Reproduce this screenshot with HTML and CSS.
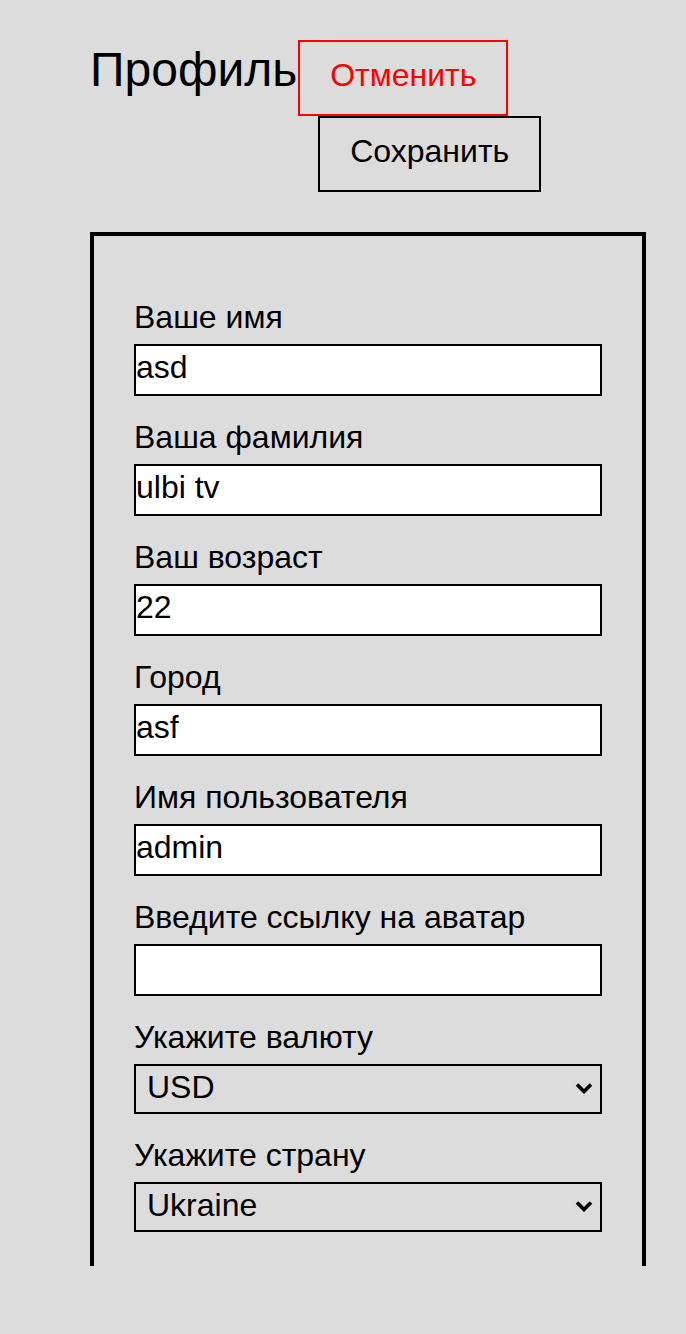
FILE: index.html
```html
<!DOCTYPE html>
<html lang="ru">
<head>
<meta charset="utf-8">
<title>Профиль</title>
<link rel="stylesheet" href="styles.css">
</head>
<body>
<div class="page">
  <div class="header">
    <h1 class="title">Профиль</h1>
    <div class="actions">
      <button class="btn btn-cancel" type="button">Отменить</button>
      <button class="btn btn-save" type="button">Сохранить</button>
    </div>
  </div>
  <div class="card">
    <div class="field">
      <label class="label">Ваше имя</label>
      <input class="input" type="text" value="asd">
    </div>
    <div class="field">
      <label class="label">Ваша фамилия</label>
      <input class="input" type="text" value="ulbi tv">
    </div>
    <div class="field">
      <label class="label">Ваш возраст</label>
      <input class="input" type="text" value="22">
    </div>
    <div class="field">
      <label class="label">Город</label>
      <input class="input" type="text" value="asf">
    </div>
    <div class="field">
      <label class="label">Имя пользователя</label>
      <input class="input" type="text" value="admin">
    </div>
    <div class="field">
      <label class="label">Введите ссылку на аватар</label>
      <input class="input" type="text" value="">
    </div>
    <div class="field">
      <label class="label">Укажите валюту</label>
      <div class="select-wrap">
        <select class="select">
          <option>USD</option>
          <option>EUR</option>
          <option>RUB</option>
        </select>
        <svg class="chevron" width="18" height="12" viewBox="0 0 18 12" aria-hidden="true">
          <polyline points="2,2.5 9,9.5 16,2.5" fill="none" stroke="#000" stroke-width="3.6" stroke-linejoin="miter"/>
        </svg>
      </div>
    </div>
    <div class="field">
      <label class="label">Укажите страну</label>
      <div class="select-wrap">
        <select class="select">
          <option>Ukraine</option>
          <option>Russia</option>
          <option>Belarus</option>
        </select>
        <svg class="chevron" width="18" height="12" viewBox="0 0 18 12" aria-hidden="true">
          <polyline points="2,2.5 9,9.5 16,2.5" fill="none" stroke="#000" stroke-width="3.6" stroke-linejoin="miter"/>
        </svg>
      </div>
    </div>
  </div>
</div>
</body>
</html>
```

FILE: styles.css
```css
html, body {
  margin: 0;
  padding: 0;
  background: #dcdcdc;
}
body {
  font-family: "Liberation Sans", Arial, sans-serif;
  color: #000;
  min-height: 1334px;
}
.page {
  padding: 40px 40px 0 90px;
}
.header {
  display: flex;
  align-items: flex-start;
}
.title {
  margin: 0 1px 0 0;
  font-size: 48px;
  font-weight: 400;
  line-height: 60px;
}
.actions {
  display: flex;
  flex-direction: column;
  align-items: flex-start;
}
.btn {
  font-family: "Liberation Sans", Arial, sans-serif;
  font-size: 32px;
  background: transparent;
  height: 76px;
  padding: 0 30px 6px 30px;
  margin: 0;
  border-radius: 0;
  cursor: pointer;
}
.btn-cancel {
  color: #ff0000;
  border: 2px solid #ff0000;
}
.btn-save {
  color: #000;
  border: 2px solid #000;
  margin-left: 20px;
}
.card {
  margin-top: 40px;
  box-sizing: border-box;
  width: 556px;
  height: 1034px;
  border: 4px solid #000;
  border-bottom: none;
  padding: 62px 40px 0 40px;
  display: flex;
  flex-direction: column;
  gap: 22px;
}
.field {
  display: flex;
  flex-direction: column;
  gap: 9px;
}
.label {
  font-size: 32px;
  line-height: 36px;
  padding-top: 1px;
}
.input {
  box-sizing: border-box;
  width: 468px;
  height: 52px;
  border: 2px solid #000;
  background: #fff;
  border-radius: 0;
  padding: 0 1px 6px 0;
  margin: 0;
  font-family: "Liberation Sans", Arial, sans-serif;
  font-size: 32px;
  color: #000;
  outline: none;
}
.select-wrap {
  position: relative;
  width: 468px;
  height: 50px;
}
.select {
  box-sizing: border-box;
  width: 468px;
  height: 50px;
  -webkit-appearance: none;
  appearance: none;
  border: 2px solid #000;
  background: transparent;
  border-radius: 0;
  padding: 0 40px 4px 11px;
  margin: 0;
  font-family: "Liberation Sans", Arial, sans-serif;
  font-size: 32px;
  color: #000;
}
.chevron {
  position: absolute;
  right: 9px;
  top: 18px;
  pointer-events: none;
}
```
